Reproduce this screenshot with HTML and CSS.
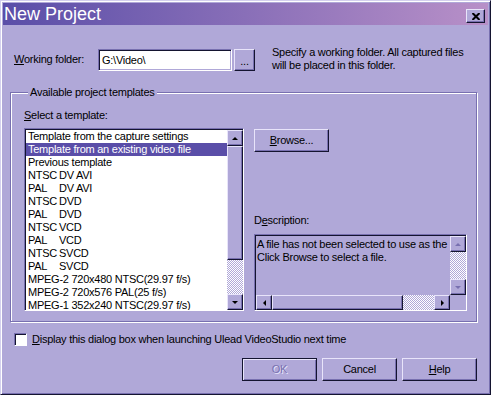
FILE: index.html
```html
<!DOCTYPE html>
<html lang="en">

<head>
    <meta charset="UTF-8">
    <title>New Project</title>
    <link rel="stylesheet" href="styles.css">
</head>

<body>
    <div class="window">
        <div class="titlebar">
            <span class="title">New Project</span>
            <button class="close" aria-label="Close">
                <svg width="8" height="7" viewBox="0 0 8 7">
                    <path d="M0.5 0 L7.5 7 M7.5 0 L0.5 7" stroke="#000" stroke-width="2" />
                </svg>
            </button>
        </div>

        <div class="content">
            <div class="folder-row">
                <label class="folder-label"><u>W</u>orking folder:</label>
                <div class="field folder-input">G:\Video\</div>
                <button class="btn dots">...</button>
                <div class="hint">Specify a working folder. All captured files<br>will be placed in this folder.</div>
            </div>

            <fieldset class="group">
                <legend>Available project templates</legend>
                <div class="group-body">
                    <div class="col-left">
                        <div class="caption"><u>S</u>elect a template:</div>
                        <div class="listbox">
                            <div class="items">
                                <div class="item">Template from the capture settings</div>
                                <div class="item selected">Template from an existing video file</div>
                                <div class="item">Previous template</div>
                                <div class="item"><span class="std">NTSC</span>DV AVI</div>
                                <div class="item"><span class="std">PAL</span>DV AVI</div>
                                <div class="item"><span class="std">NTSC</span>DVD</div>
                                <div class="item"><span class="std">PAL</span>DVD</div>
                                <div class="item"><span class="std">NTSC</span>VCD</div>
                                <div class="item"><span class="std">PAL</span>VCD</div>
                                <div class="item"><span class="std">NTSC</span>SVCD</div>
                                <div class="item"><span class="std">PAL</span>SVCD</div>
                                <div class="item">MPEG-2 720x480 NTSC(29.97 f/s)</div>
                                <div class="item">MPEG-2 720x576 PAL(25 f/s)</div>
                                <div class="item">MPEG-1 352x240 NTSC(29.97 f/s)</div>
                            </div>
                            <div class="vscroll">
                                <div class="sb-btn"><span class="arrow up"></span></div>
                                <div class="thumb"></div>
                                <div class="track"></div>
                                <div class="sb-btn"><span class="arrow down"></span></div>
                            </div>
                        </div>
                    </div>

                    <div class="col-right">
                        <button class="btn browse"><u>B</u>rowse...</button>
                        <div class="caption desc-caption">D<u>e</u>scription:</div>
                        <div class="descbox">
                            <div class="desc-text">A file has not been selected to use as the<br>Click Browse to select a file.</div>
                            <div class="vscroll short">
                                <div class="sb-btn"><span class="arrow up off"></span></div>
                                <div class="track"></div>
                                <div class="sb-btn"><span class="arrow down off"></span></div>
                            </div>
                            <div class="hscroll">
                                <div class="sb-btn"><span class="arrow left"></span></div>
                                <div class="hthumb"></div>
                                <div class="track"></div>
                                <div class="sb-btn"><span class="arrow right"></span></div>
                            </div>
                            <div class="corner"></div>
                        </div>
                    </div>
                </div>
            </fieldset>

            <div class="check-row">
                <span class="checkbox"></span>
                <span><u>D</u>isplay this dialog box when launching Ulead VideoStudio next time</span>
            </div>

            <div class="button-row">
                <button class="btn default" disabled>OK</button>
                <button class="btn">Cancel</button>
                <button class="btn"><u>H</u>elp</button>
            </div>
        </div>
    </div>
</body>

</html>
```

FILE: styles.css
```css
:root {
    --face: #b0a8d8;
    --light: #e8e4fa;
    --shadow: #7870b0;
    --dark: #141430;
    --select: #5a4ea8;
}

body {
    margin: 0;
    background-color: var(--face);
    font-family: "Liberation Sans", Arial, sans-serif;
    font-size: 11px;
    line-height: 13px;
    letter-spacing: -0.25px;
    color: #000;
}

u {
    text-decoration-thickness: 1px;
    text-underline-offset: 1px;
}

.window {
    width: 491px;
    height: 395px;
    box-sizing: border-box;
    padding: 2px;
    border: 1px solid;
    border-color: #d4d0ee var(--dark) var(--dark) #d4d0ee;
    box-shadow: inset 1px 1px 0 #fff, inset -1px -1px 0 var(--shadow);
    background-color: var(--face);
}

.titlebar {
    height: 22px;
    display: flex;
    justify-content: space-between;
    background: linear-gradient(to right, #5a4ea8, #b890c8);
}

.title {
    color: #fff;
    font-size: 18px;
    line-height: 22px;
    letter-spacing: 0;
    padding-left: 1px;
}

.close {
    width: 19px;
    height: 14px;
    margin: 6px 3px 0 0;
    padding: 0;
    display: flex;
    align-items: center;
    justify-content: center;
    background-color: var(--face);
    border: 1px solid;
    border-color: var(--light) var(--dark) var(--dark) var(--light);
    box-shadow: inset -1px -1px 0 var(--shadow);
}

.content {
    padding: 22px 11px 0 11px;
}

/* working folder */
.folder-row {
    display: flex;
    align-items: center;
}

.folder-label {
    width: 84px;
}

.field {
    box-sizing: border-box;
    border: 1px solid;
    border-color: var(--shadow) #fff #fff var(--shadow);
    box-shadow: inset 1px 1px 0 var(--dark), inset -1px -1px 0 var(--face);
    background-color: #fff;
}

.folder-input {
    width: 134px;
    height: 22px;
    padding: 4px 3px;
}

.btn {
    box-sizing: border-box;
    width: 75px;
    height: 23px;
    padding: 0;
    font: inherit;
    letter-spacing: inherit;
    color: #000;
    background-color: var(--face);
    border: 1px solid;
    border-color: var(--light) var(--dark) var(--dark) var(--light);
    box-shadow: inset -1px -1px 0 var(--shadow);
}

.btn.dots {
    width: 21px;
    height: 22px;
    margin-left: 2px;
    padding-top: 4px;
}

.hint {
    margin-left: 17px;
    margin-top: -1px;
}

/* templates group */
.group {
    margin: 14px 0 0 -4px;
    padding: 10px 9px 10px 13px;
    border: 1px solid var(--shadow);
    box-shadow: inset 1px 1px 0 #fff, 1px 1px 0 #fff;
}

.group legend {
    margin-left: 4px;
    padding: 0 2px;
    background-color: var(--face);
}

.group-body {
    display: flex;
    gap: 10px;
}

.caption {
    height: 13px;
    margin-bottom: 6px;
}

.listbox {
    width: 220px;
    height: 183px;
    box-sizing: border-box;
    display: flex;
    background-color: #fff;
    border: 1px solid;
    border-color: var(--shadow) #fff #fff var(--shadow);
    box-shadow: inset 1px 1px 0 var(--dark);
    padding: 1px 0 0 1px;
}

.items {
    flex: 1;
    overflow: hidden;
    white-space: nowrap;
}

.item {
    height: 13px;
    padding-left: 2px;
}

.item.selected {
    background-color: var(--select);
    color: #fff;
}

.std {
    display: inline-block;
    width: 31px;
}

.vscroll {
    width: 16px;
    display: flex;
    flex-direction: column;
}

.sb-btn {
    box-sizing: border-box;
    width: 16px;
    height: 16px;
    display: flex;
    align-items: center;
    justify-content: center;
    background-color: var(--face);
    border: 1px solid;
    border-color: var(--light) var(--dark) var(--dark) var(--light);
    box-shadow: inset -1px -1px 0 var(--shadow);
}

.thumb {
    box-sizing: border-box;
    height: 114px;
    background-color: var(--face);
    border: 1px solid;
    border-color: var(--light) var(--dark) var(--dark) var(--light);
    box-shadow: inset -1px -1px 0 var(--shadow);
}

.track {
    flex: 1;
    background-image: repeating-conic-gradient(#fff 0 25%, var(--face) 0 50%);
    background-size: 2px 2px;
}

.arrow {
    width: 0;
    height: 0;
    border: 0 solid transparent;
}

.arrow.up {
    border-width: 0 3px 3px;
    border-bottom-color: #000;
}

.arrow.down {
    border-width: 3px 3px 0;
    border-top-color: #000;
}

.arrow.left {
    border-width: 3px 3px 3px 0;
    border-right-color: #000;
}

.arrow.right {
    border-width: 3px 0 3px 3px;
    border-left-color: #000;
}

.arrow.up.off {
    border-bottom-color: var(--shadow);
}

.arrow.down.off {
    border-top-color: var(--shadow);
}

.col-right {
    display: flex;
    flex-direction: column;
}

.browse {
    margin-top: 20px;
}

.desc-caption {
    margin-top: 62px;
    margin-bottom: 7px;
}

.descbox {
    width: 213px;
    height: 77px;
    box-sizing: border-box;
    display: grid;
    grid-template-columns: 1fr 16px;
    grid-template-rows: 1fr 15px;
    border: 1px solid;
    border-color: var(--shadow) #fff #fff var(--shadow);
    box-shadow: inset 1px 1px 0 var(--dark);
    padding: 1px 0 0 1px;
}

.desc-text {
    overflow: hidden;
    white-space: nowrap;
    padding: 2px 0 0 1px;
}

.vscroll.short {
    width: 16px;
}

.hscroll {
    display: flex;
}

.hscroll .sb-btn {
    height: 15px;
}

.hthumb {
    box-sizing: border-box;
    width: 131px;
    background-color: var(--face);
    border: 1px solid;
    border-color: var(--light) var(--dark) var(--dark) var(--light);
    box-shadow: inset -1px -1px 0 var(--shadow);
}

.corner {
    background-color: var(--face);
}

/* bottom */
.check-row {
    display: flex;
    align-items: center;
    gap: 5px;
    margin-top: 11px;
}

.checkbox {
    box-sizing: border-box;
    width: 13px;
    height: 13px;
    background-color: #fff;
    border: 1px solid;
    border-color: var(--shadow) #fff #fff var(--shadow);
    box-shadow: inset 1px 1px 0 var(--dark);
}

.button-row {
    display: flex;
    justify-content: flex-end;
    gap: 5px;
    margin-top: 12px;
}

.btn.default {
    border-color: var(--dark);
    box-shadow: inset 1px 1px 0 var(--light), inset -1px -1px 0 var(--shadow);
}

.btn:disabled {
    color: var(--shadow);
    text-shadow: 1px 1px 0 var(--light);
}
```
